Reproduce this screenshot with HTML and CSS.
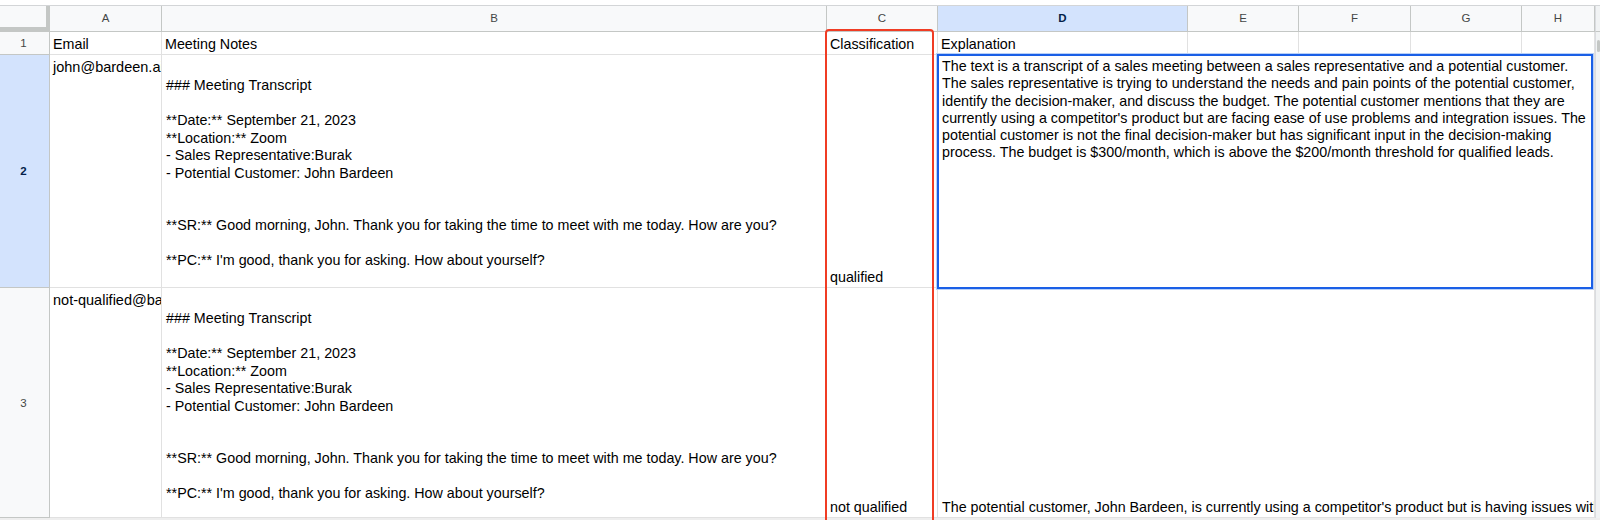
FILE: index.html
```html
<!DOCTYPE html>
<html>
<head>
<meta charset="utf-8">
<link rel="stylesheet" href="styles.css">
</head>
<body>
<div class="sheet">
  <div class="grid">
    <!-- column headers -->
    <div class="corner"></div>
    <div class="colhead">A</div>
    <div class="colhead">B</div>
    <div class="colhead">C</div>
    <div class="colhead colhead-active">D</div>
    <div class="colhead">E</div>
    <div class="colhead">F</div>
    <div class="colhead">G</div>
    <div class="colhead">H</div>
    <div class="edge edge-head"></div>

    <!-- row 1 -->
    <div class="rowhead">1</div>
    <div class="cell cell-bottom">Email</div>
    <div class="cell cell-bottom">Meeting Notes</div>
    <div class="cell cell-bottom">Classification</div>
    <div class="cell cell-bottom">Explanation</div>
    <div class="cell"></div>
    <div class="cell"></div>
    <div class="cell"></div>
    <div class="cell"></div>
    <div class="edge"><span class="thumb"></span></div>

    <!-- row 2 -->
    <div class="rowhead rowhead-active">2</div>
    <div class="cell cell-top email">john@bardeen.ai</div>
    <div class="cell notes">
      <div class="blank"></div>
      <div>### Meeting Transcript</div>
      <div class="blank"></div>
      <div>**Date:** September 21, 2023</div>
      <div>**Location:** Zoom</div>
      <div>- Sales Representative:Burak</div>
      <div>- Potential Customer: John Bardeen</div>
      <div class="blank"></div>
      <div class="blank"></div>
      <div>**SR:** Good morning, John. Thank you for taking the time to meet with me today. How are you?</div>
      <div class="blank"></div>
      <div>**PC:** I'm good, thank you for asking. How about yourself?</div>
    </div>
    <div class="cell cell-bottom">qualified</div>
    <div class="cell cell-top wide">
      <div>The text is a transcript of a sales meeting between a sales representative and a potential customer.</div>
      <div>The sales representative is trying to understand the needs and pain points of the potential customer,</div>
      <div>identify the decision-maker, and discuss the budget. The potential customer mentions that they are</div>
      <div>currently using a competitor's product but are facing ease of use problems and integration issues. The</div>
      <div>potential customer is not the final decision-maker but has significant input in the decision-making</div>
      <div>process. The budget is $300/month, which is above the $200/month threshold for qualified leads.</div>
    </div>
    <div class="edge"></div>

    <!-- row 3 -->
    <div class="rowhead">3</div>
    <div class="cell cell-top email">not-qualified@bardeen.ai</div>
    <div class="cell notes">
      <div class="blank"></div>
      <div>### Meeting Transcript</div>
      <div class="blank"></div>
      <div>**Date:** September 21, 2023</div>
      <div>**Location:** Zoom</div>
      <div>- Sales Representative:Burak</div>
      <div>- Potential Customer: John Bardeen</div>
      <div class="blank"></div>
      <div class="blank"></div>
      <div>**SR:** Good morning, John. Thank you for taking the time to meet with me today. How are you?</div>
      <div class="blank"></div>
      <div>**PC:** I'm good, thank you for asking. How about yourself?</div>
    </div>
    <div class="cell cell-bottom">not qualified</div>
    <div class="cell cell-bottom wide">The potential customer, John Bardeen, is currently using a competitor's product but is having issues with ease of use.</div>
    <div class="edge"></div>
  </div>

  <div class="selection"></div>
  <div class="highlight"></div>
</div>
</body>
</html>
```

FILE: styles.css
```css
* { box-sizing: border-box; }

html, body {
  margin: 0;
  padding: 0;
  width: 1600px;
  height: 520px;
  overflow: hidden;
  background: #ffffff;
}

body {
  font-family: "Liberation Sans", Arial, sans-serif;
  font-size: 14.3px;
  color: #000000;
}

.sheet {
  position: relative;
  margin-top: 5px;
  border-top: 1px solid #d3d5d7;
  height: 515px;
  background: #eeeeee;
  overflow: hidden;
}

.grid {
  display: grid;
  grid-template-columns: 50px 112px 665px 111px 250px 111px 112px 111px 73px 5px;
  grid-template-rows: 26px 23px 233px 230px;
}

.corner {
  background: #f8f9fa;
  border-right: 4px solid #c4c7c5;
  border-bottom: 5px solid #c4c7c5;
}

.colhead {
  background: #f8f9fa;
  border-right: 1px solid #c4c7c5;
  border-bottom: 1px solid #c4c7c5;
  color: #444746;
  font-size: 11.5px;
  display: flex;
  align-items: center;
  justify-content: center;
  padding-bottom: 1px;
}

.colhead-active {
  background: #d3e3fd;
  color: #041e49;
  font-weight: bold;
}

.rowhead {
  background: #f8f9fa;
  border-right: 1px solid #c4c7c5;
  border-bottom: 1px solid #c4c7c5;
  color: #444746;
  font-size: 11.5px;
  display: flex;
  align-items: center;
  justify-content: center;
  padding-right: 2px;
}

.rowhead-active {
  background: #d3e3fd;
  color: #041e49;
  font-weight: bold;
}

.edge {
  background: #f1f3f4;
  border-left: 1px solid #dadce0;
  position: relative;
}

.edge-head {
  border-bottom: 1px solid #c4c7c5;
}

.thumb {
  position: absolute;
  left: 1px;
  top: 8px;
  width: 3px;
  height: 12px;
  border-radius: 2px;
  background: #c4c7c5;
}

.cell {
  background: #ffffff;
  border-right: 1px solid #e1e1e1;
  border-bottom: 1px solid #e1e1e1;
  line-height: 17.3px;
  padding: 0 3px;
  white-space: nowrap;
  overflow: hidden;
}

.cell-bottom {
  display: flex;
  align-items: flex-end;
  padding-bottom: 1px;
}

.cell-top {
  padding-top: 3px;
}

.email {
  padding-top: 4px;
  font-size: 14.5px;
}

.notes {
  padding-top: 4.5px;
  padding-left: 4px;
  line-height: 17.5px;
}

.blank {
  height: 17.5px;
}

.wide {
  grid-column: span 5;
  padding-left: 4px;
}

.selection {
  position: absolute;
  left: 937px;
  top: 48px;
  width: 656px;
  height: 235px;
  border: 2px solid #1a5fe6;
  box-shadow: 0 0 0 1px #b9d0f8;
  pointer-events: none;
}

.highlight {
  position: absolute;
  left: 825px;
  top: 23px;
  width: 109px;
  height: 600px;
  border: 2px solid #f03c24;
  border-radius: 4px;
  pointer-events: none;
}
```
